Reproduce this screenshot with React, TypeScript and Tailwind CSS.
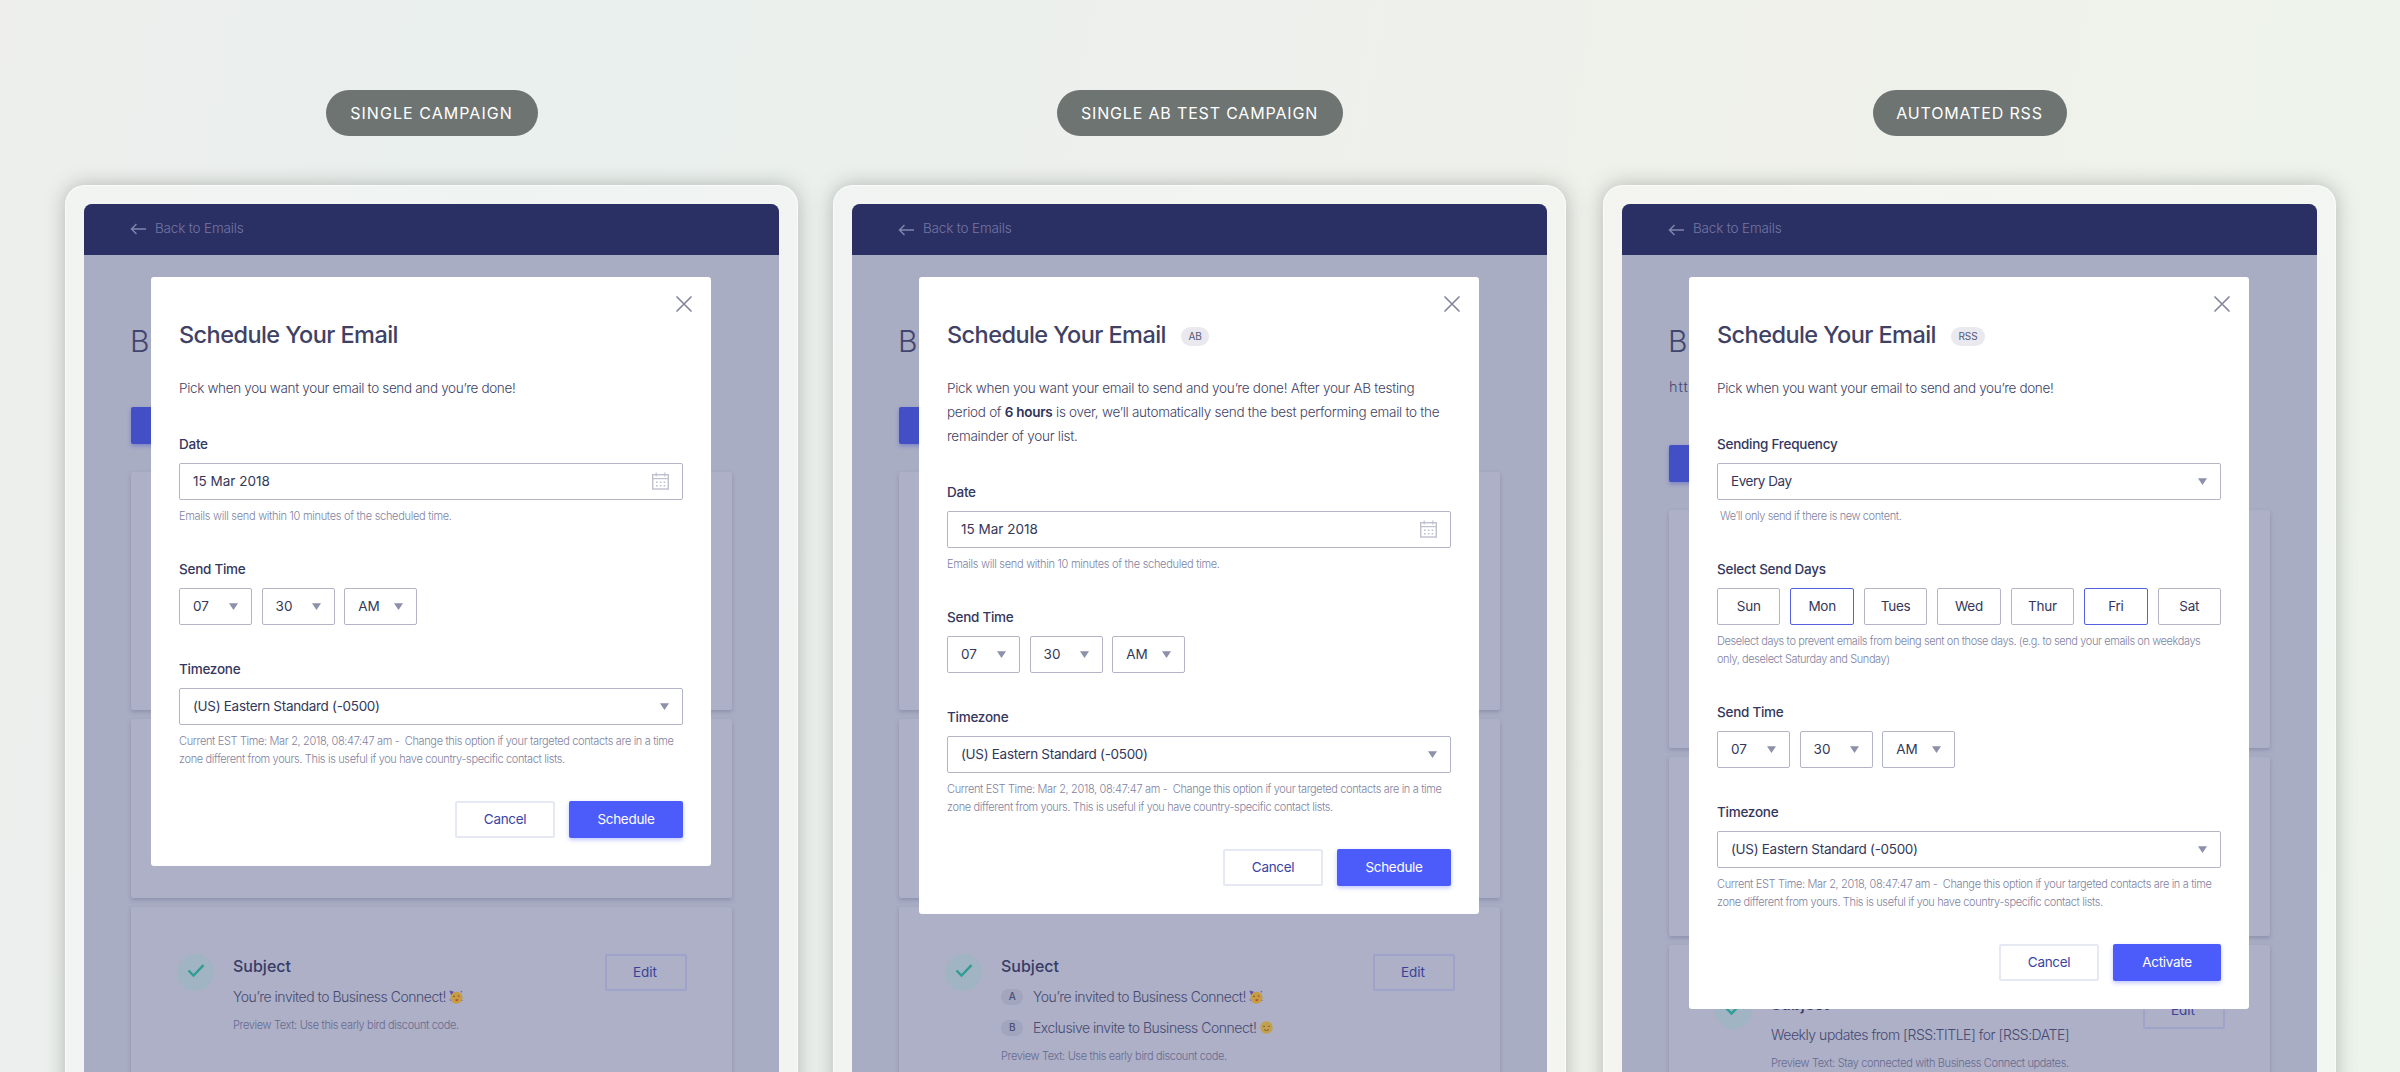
import type { ReactNode } from 'react';
import { clsx } from 'clsx';

type Kind = 'single' | 'ab' | 'rss';

function Caret() {
  return (
    <svg width="9" height="7" viewBox="0 0 9 7" className="shrink-0 fill-[#8d90aa]">
      <path d="M0 .3h9L4.500 7z" />
    </svg>
  );
}

function CalendarIcon() {
  return (
    <svg width="17" height="18" viewBox="0 0 17 18" fill="none" className="shrink-0 stroke-[#bfc1cf]">
      <rect x=".7" y="2.700" width="15.600" height="14.300" strokeWidth="1.400" />
      <path d="M.7 6.700h15.600M4.200.5v4M12.800.5v4" strokeWidth="1.200" />
      <path d="M4 10.200h9.500M4 13.700h9.500" strokeWidth="1.600" strokeDasharray="1.600 2.200" />
    </svg>
  );
}

function PartyFace() {
  return (
    <svg width="14" height="14" viewBox="0 0 14 14" className="shrink-0">
      <circle cx="7.500" cy="7.700" r="6" fill="#c99c42" />
      <path d="M.4.4l4.600 1.400-3 3.200z" fill="#5a53a8" />
      <path d="M11.400 1.200l1.800-.5-.2 2.400z" fill="#5a6cb0" />
      <path d="M4 6.600q1-1 2 0M8.700 6.300q1-1 2 0" stroke="#5f4433" strokeWidth=".8" fill="none" />
      <path d="M6.300 9.400l3.200-.6-.8 2.200-1.800.2z" fill="#b0593f" />
      <path d="M12.800 10.200l.8.800M1 9.400l.6 1.400" stroke="#6b58b4" strokeWidth="1" />
    </svg>
  );
}

function SmileFace() {
  return (
    <svg width="13" height="13" viewBox="0 0 13 13" className="shrink-0">
      <circle cx="6.500" cy="6.500" r="6.200" fill="#c3a04c" />
      <path d="M3 5.600q1-1 2 0M8 5.600q1-1 2 0M4 8.700q2.500 1.600 5 0" stroke="#6b5138" strokeWidth=".8" fill="none" />
    </svg>
  );
}

function Box({ children, className }: { children: ReactNode; className?: string }) {
  return (
    <div
      className={clsx(
        'flex h-[37px] items-center justify-between rounded-[2px] border border-[#b3b5c6] px-[13px] pb-px text-[13.500px] text-[#34375a]',
        className,
      )}
    >
      {children}
    </div>
  );
}

function Label({ children }: { children: ReactNode }) {
  return <div className="mb-[9px] h-[19px] text-[13.500px] leading-[19px] font-medium tracking-[-0.260px] text-[#34375d]">{children}</div>;
}

function Help({ children, className = 'tracking-[-0.350px]' }: { children: ReactNode; className?: string }) {
  return <p className={clsx('mt-[7px] text-[11px] leading-[18px] font-light whitespace-nowrap text-[#80839f]', className)}>{children}</p>;
}

function SendTime() {
  return (
    <div>
      <Label>Send Time</Label>
      <div className="flex gap-[9.600px]">
        {['07', '30', 'AM'].map((value) => (
          <Box key={value} className="w-[73px]">
            {value}
            <Caret />
          </Box>
        ))}
      </div>
    </div>
  );
}

function Timezone() {
  return (
    <div>
      <Label>Timezone</Label>
      <Box className="tracking-[-0.310px]">
        (US) Eastern Standard (-0500)
        <Caret />
      </Box>
      <Help>
        Current EST Time: Mar 2, 2018, 08:47:47 am -&nbsp; Change this option if your targeted contacts are in a time
        <br />
        zone different from yours. This is useful if you have country-specific contact lists.
      </Help>
    </div>
  );
}

function SendDays() {
  return (
    <div>
      <Label>Select Send Days</Label>
      <div className="flex gap-[10px]">
        {['Sun', 'Mon', 'Tues', 'Wed', 'Thur', 'Fri', 'Sat'].map((day) => (
          <div
            key={day}
            className={clsx(
              'flex h-[37px] flex-1 items-center justify-center rounded-[2px] border pb-px text-[13.500px] tracking-[-0.250px] text-[#34375a]',
              day === 'Mon' || day === 'Fri' ? 'border-[#5562e0]' : 'border-[#b3b5c6]',
            )}
          >
            {day}
          </div>
        ))}
      </div>
      <Help className="tracking-[-0.400px]">
        Deselect days to prevent emails from being sent on those days. (e.g. to send your emails on weekdays
        <br />
        only, deselect Saturday and Sunday)
      </Help>
    </div>
  );
}

function Modal({ kind }: { kind: Kind }) {
  return (
    <div className="absolute top-[73px] left-[67px] w-[560px] rounded-[3px] bg-white px-[28px] pt-[39px] pb-[28px] text-[#3f4266]">
      <svg
        width="16"
        height="16"
        viewBox="0 0 16 16"
        className="absolute top-[19px] right-[19px] stroke-[#85879f]"
        strokeWidth="1.700"
        strokeLinecap="round"
      >
        <path d="M1 1l14 14M15 1L1 15" />
      </svg>

      <div className="flex h-[38px] items-center">
        <h2 className="text-[23.500px] leading-[38px] font-medium tracking-[-0.560px] text-[#3f4265]">Schedule Your Email</h2>
        {kind !== 'single' && (
          <span className="mt-[2px] ml-[15px] flex h-[19px] items-center rounded-full bg-[#e9e9ef] px-[7.500px] text-[10px] text-[#55587a]">
            {kind === 'ab' ? 'AB' : 'RSS'}
          </span>
        )}
      </div>

      <p
        className={clsx(
          'mt-[22px] text-[13.500px] leading-[24px] font-light whitespace-nowrap',
          kind === 'ab' ? 'tracking-[-0.270px]' : 'tracking-[-0.340px]',
        )}
      >
        Pick when you want your email to send and you’re done!
        {kind === 'ab' && (
          <>
            {' '}
            After your AB testing
            <br />
            period of <b className="font-semibold text-[#2f3259]">6 hours</b> is over, we’ll automatically send the best performing
            email to the
            <br />
            remainder of your list.
          </>
        )}
      </p>

      <div className="mt-[35px] flex flex-col gap-[35px]">
        {kind === 'rss' ? (
          <>
            <div>
              <Label>Sending Frequency</Label>
              <Box className="tracking-[-0.450px]">
                Every Day
                <Caret />
              </Box>
              <Help className="pl-[3px] tracking-[-0.380px]">We’ll only send if there is new content.</Help>
            </div>
            <SendDays />
          </>
        ) : (
          <div>
            <Label>Date</Label>
            <Box>
              15 Mar 2018
              <CalendarIcon />
            </Box>
            <Help className="tracking-[-0.290px]">Emails will send within 10 minutes of the scheduled time.</Help>
          </div>
        )}
        <SendTime />
        <Timezone />
      </div>

      <div className="mt-[33px] flex justify-end gap-[14px]">
        <button className="h-[37px] w-[100px] rounded-[2px] border-2 border-[#e6e8f4] pb-px text-[13.500px] tracking-[-0.330px] text-[#3a44a5]">
          Cancel
        </button>
        <button
          className={clsx(
            'h-[37px] rounded-[2px] bg-[#4c5cfb] pb-px text-[13.500px] tracking-[-0.300px] text-white shadow-[0_2px_4px_rgba(76,92,251,0.35)]',
            kind === 'rss' ? 'w-[108px]' : 'w-[114px]',
          )}
        >
          {kind === 'rss' ? 'Activate' : 'Schedule'}
        </button>
      </div>
    </div>
  );
}

function Variant({ letter, children }: { letter: string; children: ReactNode }) {
  return (
    <div className="flex h-[31px] items-center">
      <span className="mr-[10px] flex h-[16px] w-[22px] items-center justify-center rounded-full bg-[#a1a5be] text-[10px] font-medium text-[#4c4f78]">
        {letter}
      </span>
      {children}
    </div>
  );
}

function SubjectCard({ kind }: { kind: Kind }) {
  return (
    <div className="flex h-[300px] items-start rounded-[2px] bg-[#adb0c6] pt-[47px] pr-[45px] pl-[46px] shadow-[0_2px_4px_rgba(70,75,120,0.3)]">
      <div className="flex size-[37px] shrink-0 items-center justify-center rounded-full bg-[#a0b4c3]">
        <svg width="18" height="14" viewBox="0 0 18 14" fill="none" className="mb-[3px] stroke-[#2f9d94]" strokeWidth="2.400">
          <path d="M1.500 6.500l5 5L16.500 1.200" />
        </svg>
      </div>
      <div className="ml-[19px] flex-1 whitespace-nowrap text-[#474a73]">
        <div className="text-[16px] leading-[25px] font-medium text-[#383b68]">Subject</div>
        <div className="mt-[2px] text-[14px] font-light tracking-[-0.480px]">
          {kind === 'single' && (
            <div className="flex h-[31px] items-center gap-[3px]">
              You’re invited to Business Connect!
              <PartyFace />
            </div>
          )}
          {kind === 'ab' && (
            <>
              <Variant letter="A">
                <span className="mr-[3px]">You’re invited to Business Connect!</span>
                <PartyFace />
              </Variant>
              <Variant letter="B">
                <span className="mr-[4px]">Exclusive invite to Business Connect!</span>
                <SmileFace />
              </Variant>
            </>
          )}
          {kind === 'rss' && <div className="flex h-[31px] items-center">Weekly updates from [RSS:TITLE] for [RSS:DATE]</div>}
        </div>
        <div className="mt-[4px] text-[11px] leading-[18px] font-light tracking-[-0.350px] text-[#676a91]">
          Preview Text: {kind === 'rss' ? 'Stay connected with Business Connect updates.' : 'Use this early bird discount code.'}
        </div>
      </div>
      <button className="h-[37px] w-[82px] rounded-[2px] border-2 border-[#9fa3ca] pr-[2px] pb-px text-[13.500px] text-[#3a439a]">Edit</button>
    </div>
  );
}

function Panel({ kind, title, pill, className }: { kind: Kind; title: string; pill: string; className?: string }) {
  return (
    <section className={clsx('flex w-[733px] shrink-0 flex-col items-center', className)}>
      <div
        className={clsx(
          'flex h-[46px] shrink-0 items-center justify-center rounded-full bg-[#6e7471] pb-px text-[16px] text-white',
          pill,
        )}
      >
        {title}
      </div>

      <div className="mt-[49px] h-[1000px] w-[733px] shrink-0 rounded-[20px] border border-white/60 bg-white/30 p-[18px] shadow-[0_0_20px_rgba(90,100,90,0.4)]">
        <div className="relative h-full overflow-hidden rounded-[8px] bg-[#a9adc3]">
          <header className="flex h-[51px] items-center bg-[#2b3064] pb-[2px] pl-[46px] text-[13.500px] font-light tracking-[-0.170px] text-[#7376a2]">
            <svg
              width="17"
              height="12"
              viewBox="0 0 17 12"
              fill="none"
              className={clsx('mr-[8px] stroke-[#8083ab]', kind !== 'single' && 'mt-[3px]')}
              strokeWidth="1.500"
            >
              <path d="M16 6H1.500M6.500 1l-5 5 5 5" />
            </svg>
            Back to Emails
          </header>

          <div className="px-[47px] pt-[62px]">
            <h1 className="-ml-px h-[52px] text-[30px] leading-[48px] font-light text-[#42456f]">Business Connect</h1>
            {kind === 'rss' && (
              <p className="h-[38px] pt-[6px] text-[14.500px] leading-[24px] font-light tracking-[1px] text-[#474a73]">https://</p>
            )}
            <div className="mt-[38px] h-[37px] w-[140px] rounded-[2px] bg-[#434fc4] shadow-[0_2px_4px_rgba(67,79,196,0.45)]" />
            <div className="mt-[28px] h-[238px] rounded-[2px] bg-[#adb0c6] shadow-[0_2px_4px_rgba(70,75,120,0.3)]" />
            <div className="my-[9px] h-[179px] rounded-[2px] bg-[#adb0c6] shadow-[0_2px_4px_rgba(70,75,120,0.3)]" />
            <SubjectCard kind={kind} />
          </div>

          <Modal kind={kind} />
        </div>
      </div>
    </section>
  );
}

export default function App() {
  return (
    <div className="flex h-[1072px] w-[2400px] overflow-hidden bg-[linear-gradient(100deg,#eeefed_0%,#e9f0ee_20%,#edf0ec_45%,#eff1ea_70%,#edf4ec_100%)] pt-[90px] pl-[65px] font-['Inter',sans-serif]">
      <Panel kind="single" title="SINGLE CAMPAIGN" pill="w-[212px] tracking-[1.050px]" />
      <Panel kind="ab" title="SINGLE AB TEST CAMPAIGN" pill="w-[286px] tracking-[0.830px]" className="ml-[35px]" />
      <Panel kind="rss" title="AUTOMATED RSS" pill="w-[194px] tracking-[0.850px]" className="ml-[37px]" />
    </div>
  );
}
